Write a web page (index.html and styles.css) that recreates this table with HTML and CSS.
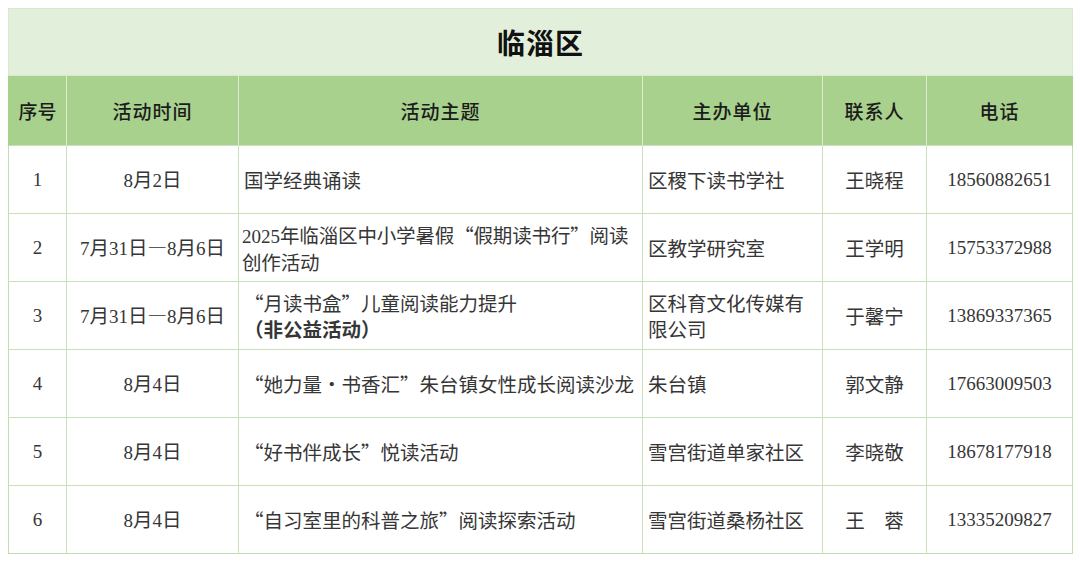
FILE: index.html
```html
<!DOCTYPE html>
<html lang="zh-CN">
<head>
<meta charset="utf-8">
<title>临淄区</title>
<link rel="stylesheet" href="styles.css">
</head>
<body>
<table class="sheet">
  <colgroup>
    <col class="c-no"><col class="c-date"><col class="c-topic"><col class="c-org"><col class="c-person"><col class="c-phone">
  </colgroup>
  <thead>
    <tr class="title-row"><th colspan="6">临淄区</th></tr>
    <tr class="head-row">
      <th>序号</th><th>活动时间</th><th>活动主题</th><th>主办单位</th><th>联系人</th><th>电话</th>
    </tr>
  </thead>
  <tbody>
    <tr>
      <td class="ctr n">1</td>
      <td class="ctr"><span class="n">8</span>月<span class="n">2</span>日</td>
      <td class="lft">国学经典诵读</td>
      <td class="lft">区稷下读书学社</td>
      <td class="ctr">王晓程</td>
      <td class="ctr n">18560882651</td>
    </tr>
    <tr>
      <td class="ctr n">2</td>
      <td class="ctr"><span class="n">7</span>月<span class="n">31</span>日—<span class="n">8</span>月<span class="n">6</span>日</td>
      <td class="lft tight"><span class="n">2025</span>年临淄区中小学暑假“假期读书行”阅读<br>创作活动</td>
      <td class="lft">区教学研究室</td>
      <td class="ctr">王学明</td>
      <td class="ctr n">15753372988</td>
    </tr>
    <tr>
      <td class="ctr n">3</td>
      <td class="ctr"><span class="n">7</span>月<span class="n">31</span>日—<span class="n">8</span>月<span class="n">6</span>日</td>
      <td class="lft two">“月读书盒”儿童阅读能力提升<br><b>（非公益活动）</b></td>
      <td class="lft two">区科育文化传媒有<br>限公司</td>
      <td class="ctr">于馨宁</td>
      <td class="ctr n">13869337365</td>
    </tr>
    <tr>
      <td class="ctr n">4</td>
      <td class="ctr"><span class="n">8</span>月<span class="n">4</span>日</td>
      <td class="lft">“她力量·书香汇”朱台镇女性成长阅读沙龙</td>
      <td class="lft">朱台镇</td>
      <td class="ctr">郭文静</td>
      <td class="ctr n">17663009503</td>
    </tr>
    <tr>
      <td class="ctr n">5</td>
      <td class="ctr"><span class="n">8</span>月<span class="n">4</span>日</td>
      <td class="lft">“好书伴成长”悦读活动</td>
      <td class="lft">雪宫街道单家社区</td>
      <td class="ctr">李晓敬</td>
      <td class="ctr n">18678177918</td>
    </tr>
    <tr>
      <td class="ctr n">6</td>
      <td class="ctr"><span class="n">8</span>月<span class="n">4</span>日</td>
      <td class="lft">“自习室里的科普之旅”阅读探索活动</td>
      <td class="lft">雪宫街道桑杨社区</td>
      <td class="ctr">王　蓉</td>
      <td class="ctr n">13335209827</td>
    </tr>
  </tbody>
</table>
</body>
</html>
```

FILE: styles.css
```css
html, body {
  margin: 0;
  padding: 0;
  background: #ffffff;
}
body {
  padding: 8px 8px 0 8px;
  font-family: "Noto Sans CJK SC", "Noto Sans", sans-serif;
  color: #333333;
}
.sheet {
  width: 1064px;
  border-collapse: collapse;
  table-layout: fixed;
}
.sheet th, .sheet td {
  box-sizing: border-box;
}
.c-no { width: 58px; }
.c-date { width: 172px; }
.c-topic { width: 404px; }
.c-org { width: 180px; }
.c-person { width: 104px; }
.c-phone { width: 146px; }

.title-row th {
  height: 67px;
  padding: 0;
  background: #e2efda;
  border: 1px solid #d9e9cd;
  font-size: 28px;
  font-weight: 700;
  color: #111111;
  letter-spacing: 1px;
}
.head-row th {
  height: 70px;
  padding: 0;
  background: #a9d18e;
  border-left: 1px solid #dcebd1;
  border-right: 1px solid #dcebd1;
  border-top: 0;
  border-bottom: 0;
  font-size: 19px;
  font-weight: 500;
  color: #1c1c1c;
  letter-spacing: 1px;
}
.head-row th:first-child { border-left-color: #a9d18e; letter-spacing: 0; }
.head-row th:last-child { border-right-color: #a9d18e; }

tbody td {
  height: 68px;
  padding: 0 5px;
  border: 1px solid #c9e1b9;
  font-size: 19.5px;
  line-height: 25px;
  color: #363636;
  font-weight: 400;
  white-space: nowrap;
}
tbody td.two { line-height: 26px; }
tbody td.tight { padding-left: 3px; letter-spacing: -0.15px; }
tbody tr td:first-child { border-left-color: #c3dcb1; }
tbody tr td:last-child { border-right-color: #c3dcb1; }
tbody tr:last-child td { border-bottom-color: #c3dcb1; }
.ctr { text-align: center; }
.lft { text-align: left; }
.n {
  font-family: "Liberation Serif", "Noto Sans CJK SC", serif;
  font-size: 19px;
  letter-spacing: 0;
}
td b { font-weight: 700; }
```
